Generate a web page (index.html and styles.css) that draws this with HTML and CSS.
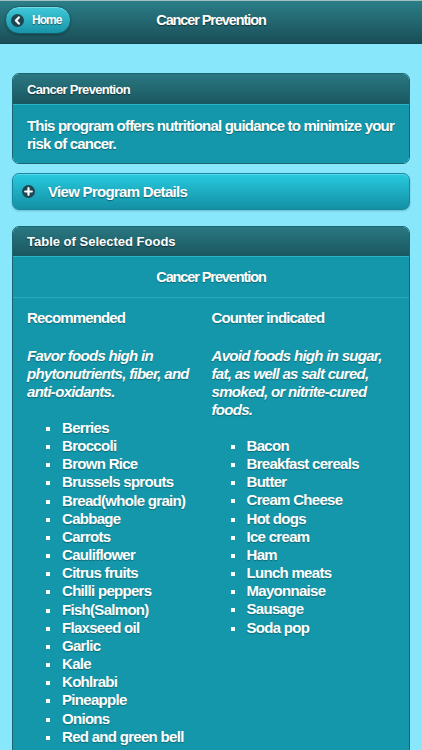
FILE: index.html
```html
<!DOCTYPE html>
<html lang="en">
<head>
  <meta charset="UTF-8">
  <title>Cancer Prevention</title>
  <link rel="stylesheet" href="styles.css">
</head>
<body>
  <div class="header">
    <a class="home-btn" href="#">
      <span class="icon-circle">
        <svg width="13" height="13" viewBox="0 0 13 13"><path d="M7.8 3.4 L4.9 6.5 L7.8 9.6" fill="none" stroke="#fff" stroke-width="2.2" stroke-linecap="round" stroke-linejoin="round"/></svg>
      </span>
      Home
    </a>
    <h1>Cancer Prevention</h1>
  </div>

  <div class="content">
    <div class="panel">
      <div class="panel-head">Cancer Prevention</div>
      <div class="panel-body intro">This program offers nutritional guidance to minimize your risk of cancer.</div>
    </div>

    <a class="details-btn" href="#">
      <span class="icon-circle">
        <svg width="13" height="13" viewBox="0 0 13 13"><path d="M6.5 3.2 V9.8 M3.2 6.5 H9.8" fill="none" stroke="#fff" stroke-width="2.2" stroke-linecap="round"/></svg>
      </span>
      View Program Details
    </a>

    <div class="panel foods-panel">
      <div class="panel-head">Table of Selected Foods</div>
      <div class="panel-body">
        <div class="foods-title">Cancer Prevention</div>
        <div class="foods-cols">
          <div class="col">
            <h3>Recommended</h3>
            <p>Favor foods high in phytonutrients, fiber, and anti-oxidants.</p>
            <ul>
              <li>Berries</li>
              <li>Broccoli</li>
              <li>Brown Rice</li>
              <li>Brussels sprouts</li>
              <li>Bread(whole grain)</li>
              <li>Cabbage</li>
              <li>Carrots</li>
              <li>Cauliflower</li>
              <li>Citrus fruits</li>
              <li>Chilli peppers</li>
              <li>Fish(Salmon)</li>
              <li>Flaxseed oil</li>
              <li>Garlic</li>
              <li>Kale</li>
              <li>Kohlrabi</li>
              <li>Pineapple</li>
              <li>Onions</li>
              <li>Red and green bell peppers</li>
            </ul>
          </div>
          <div class="col">
            <h3>Counter indicated</h3>
            <p>Avoid foods high in sugar, fat, as well as salt cured, smoked, or nitrite-cured foods.</p>
            <ul>
              <li>Bacon</li>
              <li>Breakfast cereals</li>
              <li>Butter</li>
              <li>Cream Cheese</li>
              <li>Hot dogs</li>
              <li>Ice cream</li>
              <li>Ham</li>
              <li>Lunch meats</li>
              <li>Mayonnaise</li>
              <li>Sausage</li>
              <li>Soda pop</li>
            </ul>
          </div>
        </div>
      </div>
    </div>
  </div>
</body>
</html>
```

FILE: styles.css
```css
body {
  margin: 0;
  background: #88e7fb;
  color: #fff;
  font-family: "Liberation Sans", Arial, sans-serif;
  font-weight: bold;
}

a {
  color: #fff;
  text-decoration: none;
}

/* top bar */
.header {
  height: 44px;
  box-sizing: border-box;
  border-top: 1px solid #a3bfc1;
  border-bottom: 1px solid #164650;
  background: linear-gradient(#2b7e88, #1a4e57);
  display: grid;
  grid-template-columns: 1fr auto 1fr;
  align-items: start;
  padding-top: 5px;
}

.header h1 {
  margin: 0;
  font-size: 14.5px;
  line-height: 28px;
  letter-spacing: -1.1px;
  text-shadow: 0 1px 1px rgba(0,0,0,0.5);
}

.home-btn {
  justify-self: start;
  margin-left: 5px;
  height: 28px;
  box-sizing: border-box;
  display: flex;
  align-items: center;
  gap: 8px;
  padding: 0 9px 0 5px;
  border: 1px solid #155e6a;
  border-radius: 14px;
  background: linear-gradient(#3fcadb, #1894a7);
  box-shadow: inset 0 1px 0 rgba(255,255,255,0.3), 0 1px 2px rgba(0,0,0,0.3);
  font-size: 12px;
  letter-spacing: -1px;
  text-shadow: 0 1px 1px rgba(0,0,0,0.45);
}

.icon-circle {
  width: 13px;
  height: 13px;
  border-radius: 50%;
  background: #1c4753;
  display: flex;
  flex: none;
}

/* content */
.content {
  padding: 29px 12px 0;
}

.panel {
  border: 1px solid #1a6570;
  border-radius: 7px;
  overflow: hidden;
}

.panel-head {
  height: 30px;
  padding-left: 14px;
  display: flex;
  align-items: center;
  background: linear-gradient(#2a7882, #1a5760);
  border-bottom: 1px solid #2ab6c8;
  font-size: 13px;
  letter-spacing: -0.7px;
  text-shadow: 0 1px 1px rgba(0,0,0,0.5);
}

.panel-body {
  background: #1497aa;
  text-shadow: 0 1px 1px rgba(0,0,0,0.3);
}

.intro {
  padding: 12px 6px 10px 14px;
  font-size: 15px;
  line-height: 18px;
  letter-spacing: -0.8px;
}

.details-btn {
  margin-top: 9px;
  height: 37px;
  box-sizing: border-box;
  display: flex;
  align-items: center;
  gap: 13px;
  padding-left: 9px;
  border: 1px solid #1788a0;
  border-radius: 7px;
  background: linear-gradient(#27cadf, #1490a4);
  box-shadow: inset 0 1px 0 rgba(255,255,255,0.25), 0 1px 2px rgba(0,0,0,0.2);
  font-size: 15px;
  letter-spacing: -0.7px;
  text-shadow: 0 1px 1px rgba(0,0,0,0.4);
}

.foods-panel {
  margin-top: 16px;
}

.foods-panel .panel-head {
  height: 29px;
  letter-spacing: 0;
}

.foods-title {
  height: 40px;
  display: flex;
  align-items: center;
  justify-content: center;
  border-bottom: 1px solid #2aa9bb;
  font-size: 14.5px;
  letter-spacing: -1.1px;
}

.foods-cols {
  display: grid;
  grid-template-columns: 184.5px 1fr;
  padding: 11px 12px 20px 14px;
}

.col h3 {
  margin: 0 0 20px;
  font-size: 15px;
  line-height: 18px;
  letter-spacing: -0.86px;
}

.col p {
  margin: 0 6px 18px 0;
  font-size: 15px;
  font-style: italic;
  line-height: 18px;
  letter-spacing: -0.7px;
}

.col ul {
  list-style: none;
  margin: 0;
  padding-left: 35px;
}

.col li {
  display: flex;
  align-items: flex-start;
  font-size: 15px;
  line-height: 18.15px;
  letter-spacing: -0.7px;
}

.col li::before {
  content: "";
  flex: none;
  width: 4px;
  height: 4px;
  margin: 8px 12px 0 -16px;
  background: #fff;
}
```
